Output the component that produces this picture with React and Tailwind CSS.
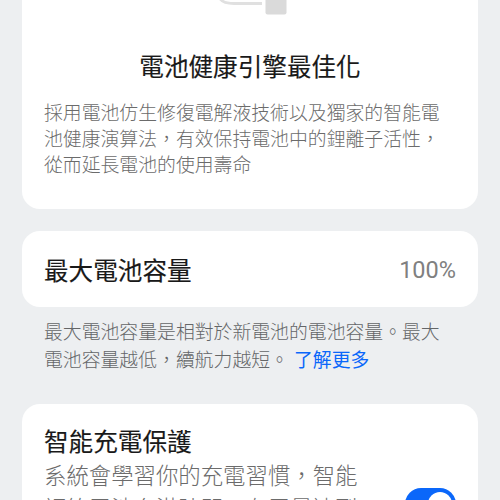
import { useState } from 'react';

function Card({ className, children }) {
  return (
    <section className={`w-[456px] shrink-0 bg-white ${className}`}>{children}</section>
  );
}

function Toggle() {
  const [enabled, setEnabled] = useState(true);

  return (
    <button
      type="button"
      role="switch"
      aria-checked={enabled}
      aria-label="智能充電保護"
      onClick={() => setEnabled(!enabled)}
      className={`flex h-8 w-[51px] items-center rounded-full p-1 ${
        enabled ? 'justify-end bg-[#0a67fa]' : 'justify-start bg-gray-300'
      }`}
    >
      <span className="size-6 rounded-full bg-white" />
    </button>
  );
}

export default function App() {
  return (
    <main
      lang="zh-Hant"
      className="flex h-screen w-full flex-col items-center overflow-hidden bg-[#edeff1] font-['Noto_Sans_CJK_TC',sans-serif] text-[#191919]"
    >
      {/* Battery health engine */}
      <Card className="h-[209px] rounded-b-[18px]">
        {/* Cable end of the illustration */}
        <svg className="ml-[190px] block h-[18px] w-20" viewBox="0 0 80 18" fill="none">
          <path d="M7 -4C8 1 14 3.5 22 3.5H50" stroke="#e0e0e0" strokeWidth="2.8" />
          <rect x="53.5" y="-6" width="21" height="20.5" rx="2" fill="#dadada" />
        </svg>
        <h1 className="mt-[29px] text-center text-[24.6px] leading-9 font-normal [-webkit-text-stroke:0.15px]">
          電池健康引擎最佳化
        </h1>
        <p className="mt-[16px] ml-[22px] text-[18.85px] leading-[26px] font-light whitespace-nowrap text-[#6b6b6b]">
          採用電池仿生修復電解液技術以及獨家的智能電
          <br />
          池健康演算法，有效保持電池中的鋰離子活性，
          <br />
          從而延長電池的使用壽命
        </p>
      </Card>

      {/* Maximum capacity */}
      <Card className="mt-[22px] flex h-[76px] items-center justify-between rounded-[18px] px-[22px]">
        <h2 className="text-[24.6px] leading-9 font-normal [-webkit-text-stroke:0.15px]">
          最大電池容量
        </h2>
        <span className="mt-0.5 font-['Roboto',sans-serif] text-[23.5px] leading-8 text-[#808080]">
          100%
        </span>
      </Card>
      <p className="mt-[10px] w-[412px] shrink-0 text-[18.85px] leading-[28px] font-light whitespace-nowrap text-[#646668]">
        最大電池容量是相對於新電池的電池容量。最大
        <br />
        電池容量越低，續航力越短。
        <a href="#more" className="ml-[5px] font-normal text-[#0a67fa]">
          了解更多
        </a>
      </p>

      {/* Smart charging */}
      <Card className="mt-[31px] flex h-[172px] justify-between rounded-[18px] px-[22px] pt-[18px]">
        <div>
          <h2 className="text-[24.6px] leading-9 font-normal [-webkit-text-stroke:0.15px]">
            智能充電保護
          </h2>
          <p className="text-[22.4px] leading-[33px] font-light whitespace-nowrap text-[#6b6b6b]">
            系統會學習你的充電習慣，智能
            <br />
            調節電池充滿時間，在電量達到
          </p>
        </div>
        <div className="mt-[66px]">
          <Toggle />
        </div>
      </Card>
    </main>
  );
}
